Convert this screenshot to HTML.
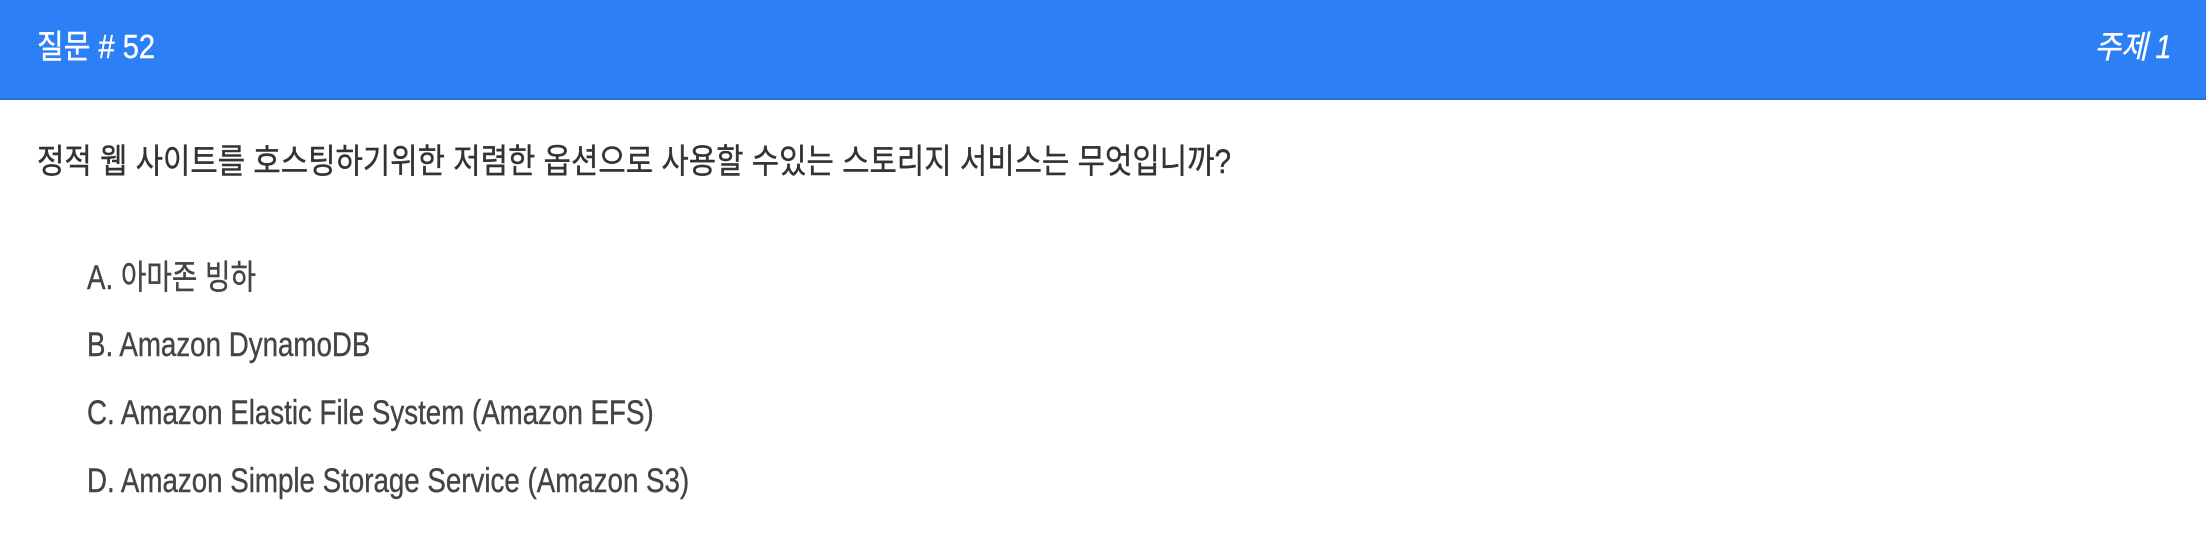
<!DOCTYPE html>
<html><head><meta charset="utf-8"><style>
html,body{margin:0;padding:0;width:2206px;height:534px;background:#fff;overflow:hidden}
body{position:relative;font-family:"Liberation Sans","Noto Sans CJK KR",sans-serif}
.hdr{position:absolute;left:0;top:0;width:2206px;height:98px;background:#2c7ff5;border-bottom:2px solid #2670da}
.t{position:absolute;white-space:nowrap;line-height:1;transform-origin:0 0;-webkit-text-stroke:0.4px currentColor}
.h{color:#fff;font-size:33px;top:30px;left:37px;transform:scaleX(0.88)}
.hr{color:#fff;font-size:32px;top:31px;right:34px;font-style:italic;transform-origin:100% 0;transform:scaleX(0.9)}
.q{color:#333;font-size:34px;left:37px;top:145px;transform:scaleX(0.875)}
.o{color:#444;font-size:34px;left:87px;transform:scaleX(0.815)}
</style></head><body>
<div class="hdr"></div>
<div class="t h">질문 # 52</div>
<div class="t hr">주제 1</div>
<div class="t q">정적 웹 사이트를 호스팅하기위한 저렴한 옵션으로 사용할 수있는 스토리지 서비스는 무엇입니까?</div>
<div class="t o" style="top:261px">A. 아마존 빙하</div>
<div class="t o" style="top:328px">B. Amazon DynamoDB</div>
<div class="t o" style="top:396px">C. Amazon Elastic File System (Amazon EFS)</div>
<div class="t o" style="top:464px">D. Amazon Simple Storage Service (Amazon S3)</div>
</body></html>
